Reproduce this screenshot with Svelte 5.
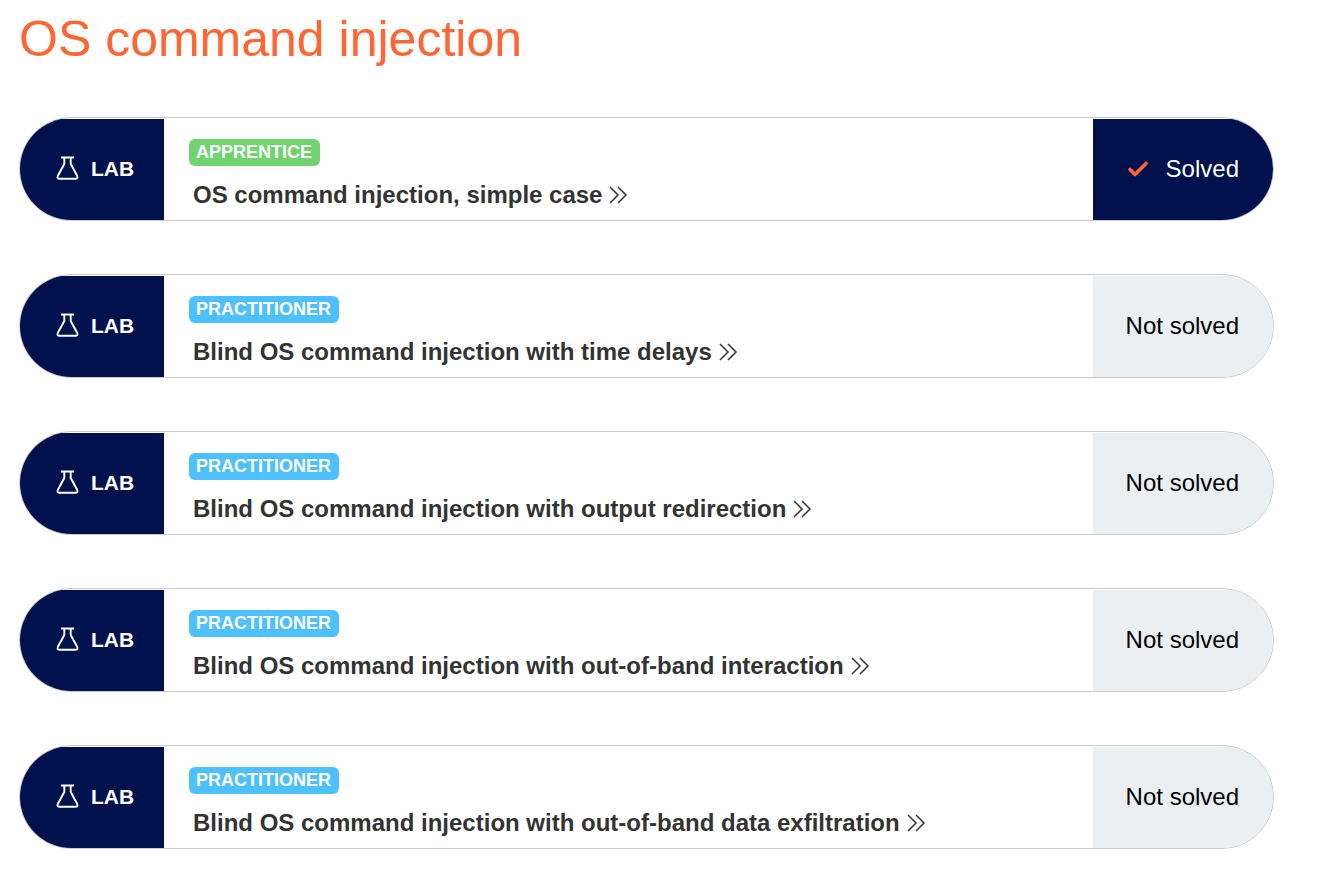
<script>
  const labs = [
    { level: 'Apprentice', title: 'OS command injection, simple case', solved: true },
    { level: 'Practitioner', title: 'Blind OS command injection with time delays', solved: false },
    { level: 'Practitioner', title: 'Blind OS command injection with output redirection', solved: false },
    { level: 'Practitioner', title: 'Blind OS command injection with out-of-band interaction', solved: false },
    { level: 'Practitioner', title: 'Blind OS command injection with out-of-band data exfiltration', solved: false }
  ];
</script>

<main>
  <h1>OS command injection</h1>
  <div class="labs">
    {#each labs as lab}
      <article class="lab">
        <div class="kind">
          <svg width="23" height="26" viewBox="0 0 23 26" fill="none" stroke="#fff" stroke-width="1.9" stroke-linejoin="round" aria-hidden="true">
            <path d="M5 1.500h13M8.300 1.500V8L2 19.500Q.6 22.800 3.200 22.800H19.800Q22.400 22.800 21 19.500L14.700 8V1.500" />
          </svg>
          <span>LAB</span>
        </div>
        <div class="body">
          <span class="level" class:apprentice={lab.level === 'Apprentice'}>{lab.level.toUpperCase()}</span>
          <a href="#lab">
            {lab.title}
            <svg width="19" height="18" viewBox="0 0 19 18" fill="none" stroke="#333332" stroke-width="1.5" aria-hidden="true">
              <path d="M1 1l8 8-8 8M9 1l8 8-8 8" />
            </svg>
          </a>
        </div>
        <div class="status" class:solved={lab.solved}>
          {#if lab.solved}
            <svg width="22" height="18" viewBox="0 0 22 18" fill="none" stroke="#ff6633" stroke-width="3.6" stroke-linecap="round" stroke-linejoin="round" aria-hidden="true">
              <path d="M3 9.500l5 5L19 3.500" />
            </svg>
          {/if}
          <span>{lab.solved ? 'Solved' : 'Not solved'}</span>
        </div>
      </article>
    {/each}
  </div>
</main>

<style>
  :global(body) {
    margin: 0;
    background: #fff;
  }

  main {
    padding: 9px 47px 24px 19px;
    font-family: "Liberation Sans", Arial, sans-serif;
    color: #333332;
  }

  h1 {
    margin: 0 0 48px;
    font-size: 50px;
    line-height: 60px;
    font-weight: 400;
    color: #ff6633;
  }

  .labs {
    display: flex;
    flex-direction: column;
    gap: 53px;
  }

  .lab {
    display: flex;
    box-sizing: border-box;
    min-height: 104px;
    padding-top: 1px;
    border: 1px solid #c8cccc;
    border-radius: 52px;
    overflow: hidden;
  }

  .kind,
  .status {
    display: flex;
    align-items: center;
    box-sizing: border-box;
    flex: none;
    padding-bottom: 2px;
  }

  .kind {
    width: 144px;
    padding-left: 36px;
    gap: 12px;
    background: #00114e;
    color: #fff;
    font-size: 21px;
    font-weight: 700;
  }

  .body {
    flex: 1;
    display: flex;
    flex-direction: column;
    align-items: flex-start;
    padding: 20px 25px 9px;
    gap: 14px;
  }

  .level {
    padding: 0 8px 0 7px;
    border-radius: 6px;
    background: #4dc0ff;
    color: #fff;
    font-size: 18px;
    font-weight: 700;
    line-height: 27px;
  }

  .level.apprentice {
    background: #70d370;
  }

  a {
    display: flex;
    align-items: center;
    gap: 7px;
    padding-left: 4px;
    color: #333332;
    font-size: 24px;
    font-weight: 700;
    line-height: 30px;
    text-decoration: none;
  }

  .status {
    width: 180px;
    justify-content: flex-end;
    gap: 17px;
    padding-right: 34px;
    background: #eaeff2;
    color: #000;
    font-size: 24px;
  }

  .status.solved {
    background: #00114e;
    color: #fff;
  }
</style>
